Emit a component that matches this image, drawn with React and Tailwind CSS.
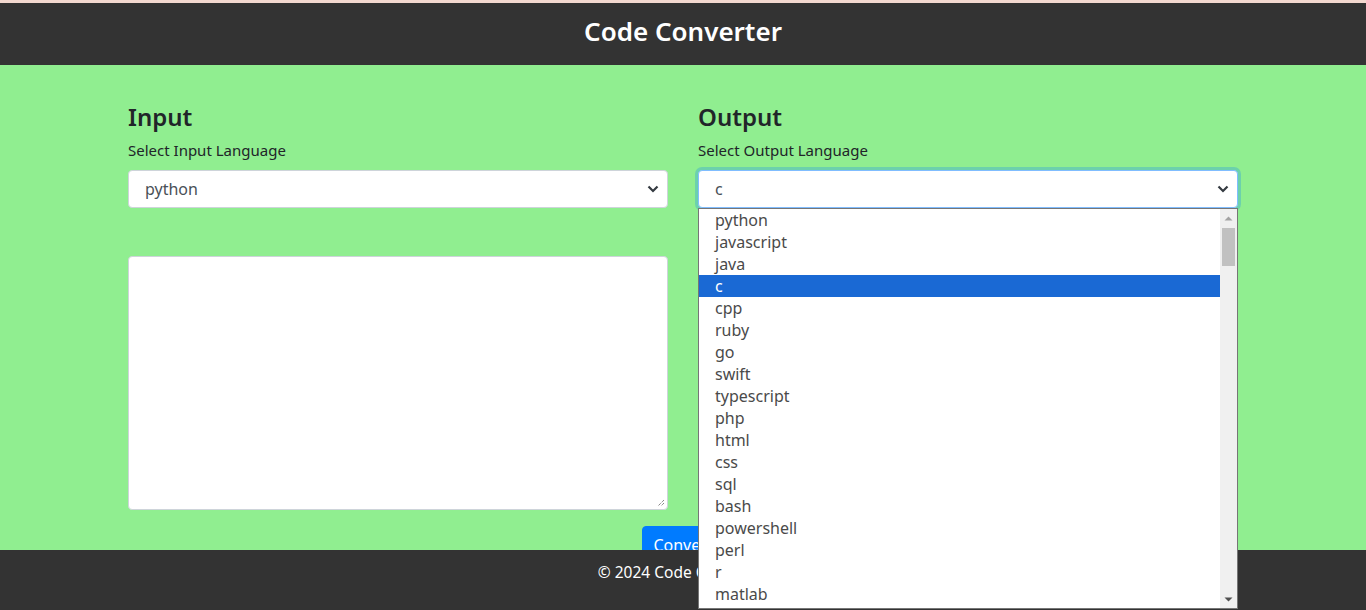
import React from "react";

const langs = ["python","javascript","java","c","cpp","ruby","go","swift","typescript","php","html","css","sql","bash","powershell","perl","r","matlab"];

function Chevron() {
  return (
    <svg width="12" height="8" viewBox="0 0 12 8" className="absolute right-[8px] top-1/2 -translate-y-1/2">
      <path d="M1.5 1.5 L6 6 L10.5 1.5" fill="none" stroke="#343a40" strokeWidth="2.2" />
    </svg>
  );
}

export default function App() {
  const font = { fontFamily: '"Noto Sans", "Open Sans", sans-serif' };
  return (
    <div className="min-h-screen bg-[#90ee90] text-[#212529]" style={font}>
      <div className="h-[3px] bg-[#f3d9d0]" />
      <header className="h-[62px] bg-[#333333] flex items-center justify-center pb-[7px]">
        <h1 className="text-white text-[26px] font-semibold leading-none">Code Converter</h1>
      </header>
      <main className="w-[1110px] mx-auto pt-[36px]">
        <div className="grid grid-cols-2 gap-[30px]">
          <div className="flex flex-col">
            <h2 className="text-[24px] font-semibold leading-[32px]">Input</h2>
            <label className="text-[15px] mt-[5px] leading-[24px]">Select Input Language</label>
            <div className="relative mt-[8px] h-[38px] bg-white border border-[#ced4da] rounded-[4px] flex items-center pl-[16px] text-[16px] text-[#495057]">
              python
              <Chevron />
            </div>
            <div className="mt-[48px] h-[254px] bg-white border border-[#ced4da] rounded-[4px] relative">
              <svg width="8" height="8" viewBox="0 0 8 8" className="absolute right-[2px] bottom-[2px]">
                <path d="M7 1 L1 7 M7 4 L4 7" stroke="#555" strokeWidth="1" strokeDasharray="1 1" />
              </svg>
            </div>
          </div>
          <div className="flex flex-col relative">
            <h2 className="text-[24px] font-semibold leading-[32px]">Output</h2>
            <label className="text-[15px] mt-[5px] leading-[24px]">Select Output Language</label>
            <div className="relative mt-[8px] h-[38px] bg-white border border-[#80bdff] rounded-[4px] flex items-center pl-[16px] text-[16px] text-[#495057] shadow-[0_0_0_3px_rgba(0,123,255,0.25)]">
              c
              <Chevron />
            </div>
            <div className="mt-[48px] h-[254px] bg-white border border-[#ced4da] rounded-[4px]" />
            <div className="absolute left-0 top-[107px] w-[540px] h-[401px] bg-white border border-[#767676] flex z-20">
              <div className="flex-1 flex flex-col">
                {langs.map((l) => (
                  <div
                    key={l}
                    className={
                      "h-[22px] leading-[22px] pl-[16px] text-[16px] " +
                      (l === "c" ? "bg-[#1a69d4] text-white" : "text-[#4a4a4a]")
                    }
                  >
                    {l}
                  </div>
                ))}
              </div>
              <div className="w-[17px] bg-[#f0f0f0] flex flex-col items-center">
                <svg width="9" height="5" viewBox="0 0 9 5" className="mt-[7px]">
                  <path d="M0.5 4.5 L4.5 0.5 L8.5 4.5 Z" fill="#a3a3a3" />
                </svg>
                <div className="mt-[7px] w-[13px] h-[38px] bg-[#c1c1c1]" />
                <div className="flex-1" />
                <svg width="9" height="5" viewBox="0 0 9 5" className="mb-[6px]">
                  <path d="M0.5 0.5 L4.5 4.5 L8.5 0.5 Z" fill="#505050" />
                </svg>
              </div>
            </div>
          </div>
        </div>
        <div className="flex justify-center mt-[16px]">
          <button className="bg-[#007bff] text-white text-[16px] rounded-[4px] px-[10px] h-[38px] border border-[#007bff]">
            Convert
          </button>
        </div>
      </main>
      <footer className="fixed bottom-0 left-0 right-0 h-[60px] bg-[#333333] flex items-start justify-center pt-[10px] text-white text-[15.5px] leading-[24px] z-10">
        © 2024 Code Converter
      </footer>
    </div>
  );
}
